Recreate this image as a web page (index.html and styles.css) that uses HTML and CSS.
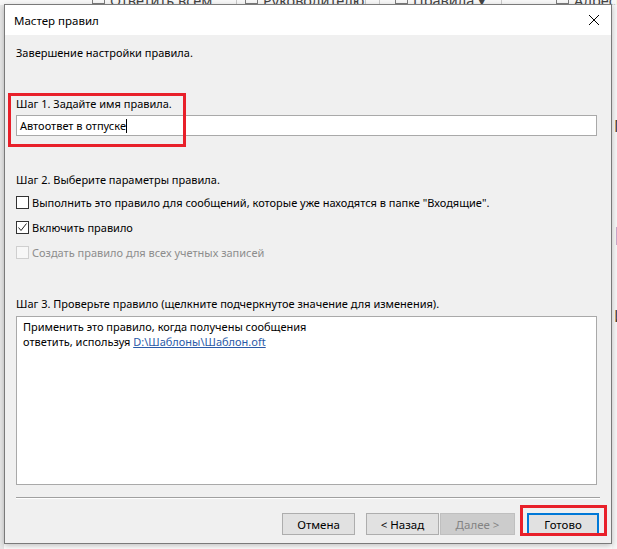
FILE: index.html
```html
<!DOCTYPE html>
<html lang="ru">
<head>
  <meta charset="UTF-8" />
  <title>Мастер правил</title>
  <link rel="stylesheet" href="styles.css">
</head>
<body>

  <div class="ribbon">
    <div class="rb-group g-reply"><span class="rb-icon"></span><span class="rb-text">Ответить всем</span></div>
    <div class="rb-group g-boss"><span class="rb-icon"></span><span class="rb-text">Руководителю</span></div>
    <div class="rb-group g-drop"></div>
    <div class="rb-group g-rules"><span class="rb-icon"></span><span class="rb-text">Правила ▾</span></div>
    <div class="rb-group g-book"><span class="rb-icon"></span><span class="rb-text">Адресная</span></div>
  </div>
  <div class="left-pane"></div>
  <div class="right-pane">
    <span class="rp-a">Г</span>
    <span class="rp-b">M</span>
    <span class="rp-c">И</span>
  </div>

  <div class="dialog">
    <div class="titlebar">
      <span class="title">Мастер правил</span>
      <svg class="close" width="12" height="12" viewBox="0 0 12 12">
        <path d="M1 1 L11 11 M11 1 L1 11" stroke="#000" stroke-width="1" fill="none"/>
      </svg>
    </div>

    <div class="content">
      <p class="intro">Завершение настройки правила.</p>

      <p class="step-label step1">Шаг 1. Задайте имя правила.</p>
      <div class="name-input">Автоответ в отпуске<span class="caret"></span></div>

      <p class="step-label step2">Шаг 2. Выберите параметры правила.</p>
      <div class="option">
        <span class="check"></span>
        Выполнить это правило для сообщений, которые уже находятся в папке "Входящие".
      </div>
      <div class="option">
        <span class="check checked">
          <svg width="11" height="11" viewBox="0 0 11 11">
            <path d="M1.5 5.5 L4 8.5 L9.5 1.5" stroke="#222" stroke-width="1" fill="none"/>
          </svg>
        </span>
        Включить правило
      </div>
      <div class="option disabled">
        <span class="check"></span>
        Создать правило для всех учетных записей
      </div>

      <p class="step-label step3">Шаг 3. Проверьте правило (щелкните подчеркнутое значение для изменения).</p>
      <div class="rule-box">
        <div>Применить это правило, когда получены сообщения</div>
        <div>ответить, используя <a href="#">D:\Шаблоны\Шаблон.oft</a></div>
      </div>

      <div class="separator"></div>

      <div class="buttons">
        <button class="btn">Отмена</button>
        <button class="btn btn-back">&lt; Назад</button>
        <button class="btn" disabled>Далее &gt;</button>
        <button class="btn btn-default">Готово</button>
      </div>
    </div>

    <div class="highlight hl-name"></div>
    <div class="highlight hl-done"></div>
  </div>

</body>
</html>
```

FILE: styles.css
```css
body {
  margin: 0;
  width: 617px;
  height: 549px;
  overflow: hidden;
  position: relative;
  background: #ffffff;
  font-family: "Noto Sans", "Open Sans", sans-serif;
  font-size: 11px;
  color: #000;
}

p {
  margin: 0;
}

/* outlook window behind the dialog */
.ribbon {
  height: 5px;
  overflow: hidden;
  background: #f8f8f8;
  display: flex;
  padding-left: 92px;
  font-size: 14.5px;
  color: #444;
  white-space: nowrap;
}

.rb-group {
  flex-shrink: 0;
  display: flex;
  align-items: flex-end;
  gap: 5px;
  height: 5px;
  border-right: 1px solid #c9c9c9;
}

.rb-text {
  line-height: 16px;
  margin-bottom: -3px;
}

.rb-icon {
  width: 11px;
  height: 3px;
  border: 1px solid #7d7d7d;
  border-top: none;
  margin-bottom: 1px;
}

.g-reply { width: 144px; }
.g-boss { width: 120px; padding-left: 8px; }
.g-drop { width: 13px; }
.g-rules { width: 106px; padding-left: 15px; }
.g-book { border-right: none; padding-left: 54px; }

.left-pane {
  position: absolute;
  left: 0;
  top: 5px;
  width: 4px;
  height: 544px;
  background: #e8e8e8;
}

.right-pane {
  position: absolute;
  left: 612px;
  top: 5px;
  width: 5px;
  height: 544px;
  background: #f7f7f7;
  overflow: hidden;
  color: #444;
}

.right-pane span {
  position: absolute;
  left: 2px;
  font-size: 16px;
}

.rp-a { top: 110px; }
.rp-b { top: 212px; color: #2b6cc4; font-size: 26px !important; }
.rp-c { top: 300px; }

/* dialog window */
.dialog {
  position: absolute;
  left: 4px;
  top: 4px;
  width: 606px;
  height: 538px;
  border: 1px solid #7a7a7a;
  background: #f0f0f0;
  box-shadow: 0 2px 6px rgba(0, 0, 0, 0.25);
}

.titlebar {
  height: 30px;
  background: #ffffff;
  display: flex;
  align-items: center;
  justify-content: space-between;
  padding: 0 10px 0 9px;
}

.title {
  font-size: 11.5px;
}

.close {
  margin-right: 1px;
}

.content {
  padding: 10px 14px 0 11px;
  line-height: 16px;
}

.step1 {
  margin-top: 35px;
}

.name-input {
  margin-top: 3px;
  height: 21px;
  box-sizing: border-box;
  border: 1px solid #a9a9a9;
  background: #fff;
  padding: 1px 3px;
  display: flex;
  align-items: center;
}

.caret {
  width: 1px;
  height: 14px;
  background: #000;
}

.step2 {
  margin-top: 36px;
}

.option {
  height: 25px;
  display: flex;
  align-items: center;
  gap: 3px;
}

.step2 + .option {
  margin-top: 2px;
}

.check {
  width: 11px;
  height: 11px;
  border: 1px solid #333;
  background: #fff;
  display: flex;
  align-items: center;
  justify-content: center;
}

.option.disabled {
  color: #8d8d8d;
}

.option.disabled .check {
  border-color: #cfcfcf;
  background: #f7f7f7;
}

.step3 {
  margin-top: 31px;
}

.rule-box {
  margin-top: 4px;
  height: 169px;
  box-sizing: border-box;
  border: 1px solid #a9a9a9;
  background: #fff;
  padding: 2px 6px;
  line-height: 15px;
}

.rule-box a {
  color: #2a5aa8;
  text-decoration: underline;
}

.separator {
  margin-top: 12px;
  margin-right: -3px;
  height: 1px;
  background: #a0a0a0;
  border-bottom: 1px solid #fff;
}

.buttons {
  margin-top: 14px;
  display: flex;
  justify-content: flex-end;
  margin-right: -2px;
}

.btn {
  width: 73px;
  height: 22px;
  font-family: inherit;
  font-size: 11.5px;
  background: #e1e1e1;
  border: 1px solid #adadad;
  padding: 0;
  color: #000;
}

.btn-back {
  margin-left: 11px;
}

.btn:disabled {
  margin-left: 1px;
  width: 75px;
  background: #cccccc;
  border-color: #bfbfbf;
  color: #838383;
}

.btn-default {
  margin-left: 12px;
  width: 72px;
  border: 2px solid #0078d7;
}

/* annotation boxes drawn over the screenshot */
.highlight {
  position: absolute;
  border: 3px solid #e8202a;
}

.hl-name {
  left: 3px;
  top: 88px;
  width: 172px;
  height: 48px;
}

.hl-done {
  left: 515px;
  top: 500px;
  width: 81px;
  height: 25px;
}
```
